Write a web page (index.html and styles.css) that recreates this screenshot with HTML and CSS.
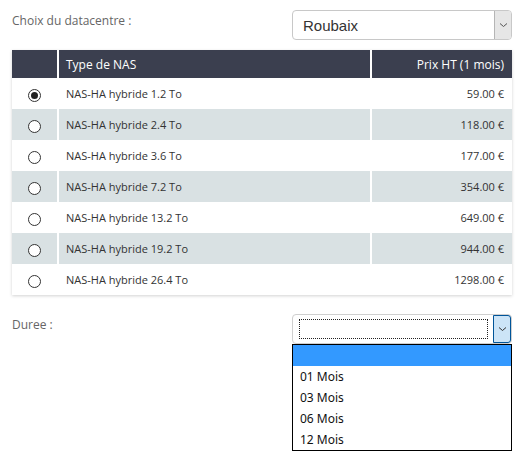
FILE: index.html
```html
<!DOCTYPE html>
<html lang="fr">
<head>
<meta charset="utf-8">
<link rel="stylesheet" href="styles.css">
</head>
<body>
<div class="page">
  <div class="field-row">
    <label class="label">Choix du datacentre :</label>
    <div class="select">
      <span class="select-value">Roubaix</span>
      <span class="select-btn"><svg width="9" height="6" viewBox="0 0 9 6"><path d="M1 1.5 L4.5 4.5 L8 1.5" fill="none" stroke="#555" stroke-width="1"/></svg></span>
    </div>
  </div>

  <table class="nas-table">
    <thead>
      <tr><th class="c-radio"></th><th class="c-name">Type de NAS</th><th class="c-price">Prix HT (1 mois)</th></tr>
    </thead>
    <tbody>
      <tr><td class="c-radio"><span class="radio checked"></span></td><td class="c-name">NAS-HA hybride 1.2 To</td><td class="c-price">59.00 €</td></tr>
      <tr class="alt"><td class="c-radio"><span class="radio"></span></td><td class="c-name">NAS-HA hybride 2.4 To</td><td class="c-price">118.00 €</td></tr>
      <tr><td class="c-radio"><span class="radio"></span></td><td class="c-name">NAS-HA hybride 3.6 To</td><td class="c-price">177.00 €</td></tr>
      <tr class="alt"><td class="c-radio"><span class="radio"></span></td><td class="c-name">NAS-HA hybride 7.2 To</td><td class="c-price">354.00 €</td></tr>
      <tr><td class="c-radio"><span class="radio"></span></td><td class="c-name">NAS-HA hybride 13.2 To</td><td class="c-price">649.00 €</td></tr>
      <tr class="alt"><td class="c-radio"><span class="radio"></span></td><td class="c-name">NAS-HA hybride 19.2 To</td><td class="c-price">944.00 €</td></tr>
      <tr><td class="c-radio"><span class="radio"></span></td><td class="c-name">NAS-HA hybride 26.4 To</td><td class="c-price">1298.00 €</td></tr>
    </tbody>
  </table>

  <div class="field-row duree">
    <label class="label">Duree :</label>
    <div class="dropdown">
      <div class="select open">
        <span class="focus-box"></span>
        <span class="select-btn active"><svg width="9" height="6" viewBox="0 0 9 6"><path d="M1 1.5 L4.5 4.5 L8 1.5" fill="none" stroke="#333" stroke-width="1"/></svg></span>
      </div>
      <ul class="options">
        <li class="selected">&nbsp;</li>
        <li>01 Mois</li>
        <li>03 Mois</li>
        <li>06 Mois</li>
        <li>12 Mois</li>
      </ul>
    </div>
  </div>
</div>
</body>
</html>
```

FILE: styles.css
```css
* { box-sizing: border-box; }
html, body { margin: 0; padding: 0; background: #fff; }
body { font-family: "Open Sans", "Liberation Sans", sans-serif; color: #555; min-height: 466px; }
.page { padding: 10px 12px 0 12px; width: 524px; }

.field-row { display: flex; justify-content: space-between; align-items: flex-start; }
.label { font-size: 12px; color: #666; padding-top: 3px; line-height: 16px; }

.select {
  width: 220px; height: 30px;
  border: 1px solid #c8c8c8; border-radius: 4px;
  background: #fff;
  display: flex; align-items: center;
  font-family: "Liberation Sans", Arial, sans-serif;
}
.select-value { flex: 1; padding-left: 10px; font-size: 15px; color: #333; }
.select-btn {
  width: 17px; height: 28px;
  background: #e6e6e6; border-left: 1px solid #b5b5b5;
  display: flex; align-items: center; justify-content: center;
  border-radius: 0 3px 3px 0;
}

.nas-table {
  margin-top: 10px;
  width: 500px;
  border-collapse: collapse;
  box-shadow: 0 1px 3px rgba(0,0,0,0.18);
  font-size: 11px;
  color: #333;
}
.nas-table th {
  background: #3b3f4f; color: #fff; font-weight: normal;
  font-size: 12px; height: 28px; text-align: left;
}
.nas-table td { height: 31px; }
.nas-table tr.alt td { background: #d9e1e3; }
.c-radio { width: 46px; text-align: center; }
.c-name { width: 313px; padding-left: 7px; border-left: 2px solid #fff; }
.nas-table .c-price { width: 141px; padding-right: 8px; text-align: right; border-left: 2px solid #fff; }

.radio {
  display: inline-block; width: 13px; height: 13px;
  border: 1px solid #333; border-radius: 50%; background: #fff;
  vertical-align: middle; position: relative; top: 1px;
}
.radio.checked::after {
  content: ""; position: absolute; left: 2px; top: 2px;
  width: 7px; height: 7px; border-radius: 50%; background: #222;
}

.duree { margin-top: 19px; }
.dropdown { width: 220px; display: flex; flex-direction: column; }
.select.open { border-color: #cfcfcf; }
.focus-box {
  flex: 1; height: 20px; margin: 0 5px 0 6px;
  border: 1px dotted #222;
}
.select-btn.active {
  background: #cce4f7; border: 1px solid #005499;
  border-radius: 0 3px 3px 0; height: 28px; width: 18px;
}
.options {
  width: 220px; margin: 0; padding: 0; list-style: none;
  background: #fff; border: 1px solid #000;
  font-family: "Noto Sans", "Liberation Sans", sans-serif;
  font-size: 12px; color: #111;
}
.options li { height: 21px; line-height: 21px; padding-left: 7px; }
.options li.selected { background: #3399ff; }
```
